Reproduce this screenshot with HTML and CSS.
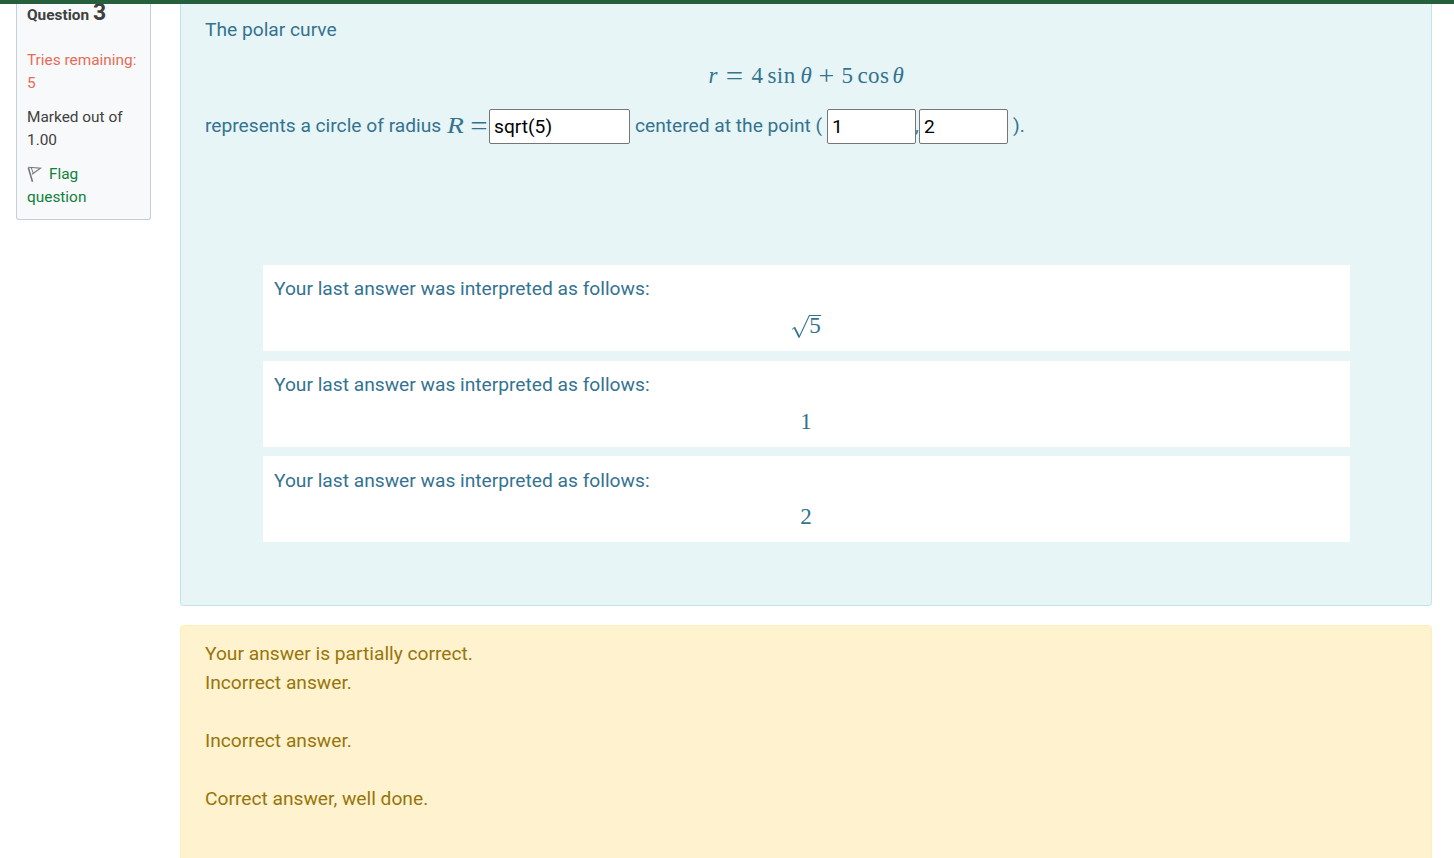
FILE: index.html
```html
<!DOCTYPE html>
<html lang="en">
<head>
    <meta charset="UTF-8">
    <meta name="viewport" content="width=device-width, initial-scale=1.0">
    <title>Question 3</title>
    <link rel="stylesheet" href="styles.css">
</head>
<body>
    <div class="topbar"></div>

    <div class="question">
        <div class="info">
            <h3 class="number">Question <span class="qno">3</span></h3>
            <div class="state">Tries remaining: 5</div>
            <div class="grade">Marked out of 1.00</div>
            <a class="flag" href="#">
                <svg class="flag-icon" width="16" height="16" viewBox="0 0 16 16" fill="none" stroke="#777">
                    <path d="M1.3 1.5L5.5 15.8" stroke-width="1.6"/>
                    <path d="M1.5 1.3L13.5 2.2L5 8.2" stroke-width="1.1"/>
                    <path d="M4.3 2L6.3 7" stroke-width="1"/>
                </svg>Flag question</a>
        </div>

        <div class="content">
            <div class="formulation">
                <p class="intro">The polar curve</p>
                <div class="math formula"><i class="var-r">r</i><span class="rel">=</span><span class="num">4</span><span class="fn sin">sin</span><i class="theta">θ</i><span class="plus">+</span><span class="num">5</span><span class="fn cos">cos</span><i class="theta">θ</i></div>
                <div class="answer-line">
                    <span class="before">represents a circle of radius</span>
                    <span class="math radius"><i>R</i><span class="eq">=</span></span>
                    <input class="answer wide" type="text" value="sqrt(5)">
                    <span class="between">centered at the point (</span>
                    <input class="answer" type="text" value="1">
                    <span class="comma">,</span>
                    <input class="answer" type="text" value="2">
                    <span class="after">).</span>
                </div>

                <div class="validations">
                    <div class="validation">
                        <p>Your last answer was interpreted as follows:</p>
                        <div class="math value root">
                            <svg width="31" height="28" viewBox="0 0 31 28" fill="none" stroke="currentColor">
                                <path d="M1 18.5L3.8 16.2" stroke-width="0.9"/>
                                <path d="M3.4 16.4L8.2 26" stroke-width="1.8"/>
                                <path d="M7.9 26.8L18.3 4.5H30" stroke-width="1.1"/>
                            </svg><span>5</span>
                        </div>
                    </div>
                    <div class="validation">
                        <p>Your last answer was interpreted as follows:</p>
                        <div class="math value">1</div>
                    </div>
                    <div class="validation">
                        <p>Your last answer was interpreted as follows:</p>
                        <div class="math value">2</div>
                    </div>
                </div>
            </div>

            <div class="feedback">
                <div>Your answer is partially correct.</div>
                <p>Incorrect answer.</p>
                <p>Incorrect answer.</p>
                <p>Correct answer, well done.</p>
            </div>
        </div>
    </div>
</body>
</html>
```
FILE: styles.css
```css
* {
    box-sizing: border-box;
}

body {
    margin: 0;
    height: 858px;
    overflow: hidden;
    background-color: #ffffff;
    font-family: Roboto, sans-serif;
    font-size: 19.22px;
    line-height: 29px;
}

p {
    margin: 0;
}

.topbar {
    position: fixed;
    top: 0;
    left: 0;
    right: 0;
    height: 4px;
    background-color: #255f3b;
}

.question {
    display: flex;
    align-items: flex-start;
    padding: 0 22px 0 16px;
}

/* Left info column */
.info {
    width: 135px;
    height: 220px;
    margin-right: 29px;
    padding: 0 10px;
    border: 1px solid #c4ced8;
    border-top: none;
    border-radius: 0 0 3px 3px;
    background-color: #f8f9fb;
    color: #3f3f3f;
    font-size: 15.4px;
    line-height: 23px;
}

.number {
    margin: 0 0 24px;
    height: 25px;
    font-size: 15.4px;
    line-height: 25px;
}

.qno {
    font-size: 23px;
}

.state {
    margin-bottom: 11px;
    color: #e56c58;
}

.grade {
    margin-bottom: 11px;
}

.flag {
    display: block;
    color: #10803b;
    text-decoration: none;
}

.flag-icon {
    margin-right: 6px;
    vertical-align: -3px;
}

/* Question text */
.content {
    flex: 1;
}

.formulation {
    height: 606px;
    padding: 15px 24px 0;
    border: 1px solid #bee5eb;
    border-top: none;
    border-radius: 0 0 4px 4px;
    background-color: #e7f5f7;
    color: #34738f;
}

.math {
    font-family: "Liberation Serif", serif;
    font-size: 23px;
}

.formula {
    display: flex;
    justify-content: center;
    height: 29px;
    margin: 17px 0 19px;
}

.var-r {
    width: 18px;
}

.rel {
    width: 25px;
    font-size: 28px;
    transform: scaleX(1.1);
}

.num {
    width: 16px;
}

.fn {
    letter-spacing: 0.4px;
}

.sin {
    width: 33px;
}

.cos {
    width: 35px;
}

.theta {
    width: 11px;
}

.plus {
    width: 30px;
    font-size: 28px;
    text-align: center;
}

.answer-line {
    display: flex;
    align-items: center;
    height: 35px;
    white-space: nowrap;
}

.answer-line > span {
    padding-bottom: 2px;
}

.before {
    width: 242px;
}

.radius {
    display: flex;
    width: 42px;
}

.radius i {
    width: 24px;
    font-size: 24px;
    transform: scaleX(1.15);
    transform-origin: left;
}

.eq {
    font-size: 28px;
    transform: scaleX(1.1);
}

.answer {
    width: 89px;
    height: 35px;
    padding: 1px 4px;
    border: 1px solid #767676;
    border-radius: 2px;
    background-color: #ffffff;
    color: #000000;
    font-family: inherit;
    font-size: 19.2px;
}

.wide {
    width: 141px;
}

.between {
    width: 197px;
    padding-left: 5px;
}

.comma {
    width: 3px;
    text-indent: -1px;
}

.after {
    padding-left: 5px;
}

/* Validation boxes */
.validations {
    display: flex;
    flex-direction: column;
    gap: 9.6px;
    margin: 121px 57px 0 58px;
}

.validation {
    height: 86px;
    padding: 9.4px 12px 0 11px;
    background-color: #ffffff;
}

.value {
    margin-top: 7.7px;
    text-align: center;
}

.root {
    display: flex;
    justify-content: center;
}

.root span {
    width: 12px;
    margin-left: -13px;
}

/* Feedback */
.feedback {
    height: 260px;
    margin-top: 19px;
    padding: 13px 24px;
    border: 1px solid #ffeeba;
    border-radius: 4px;
    background-color: #fff2ce;
    color: #97750b;
}

.feedback p {
    margin-bottom: 29px;
}
```
